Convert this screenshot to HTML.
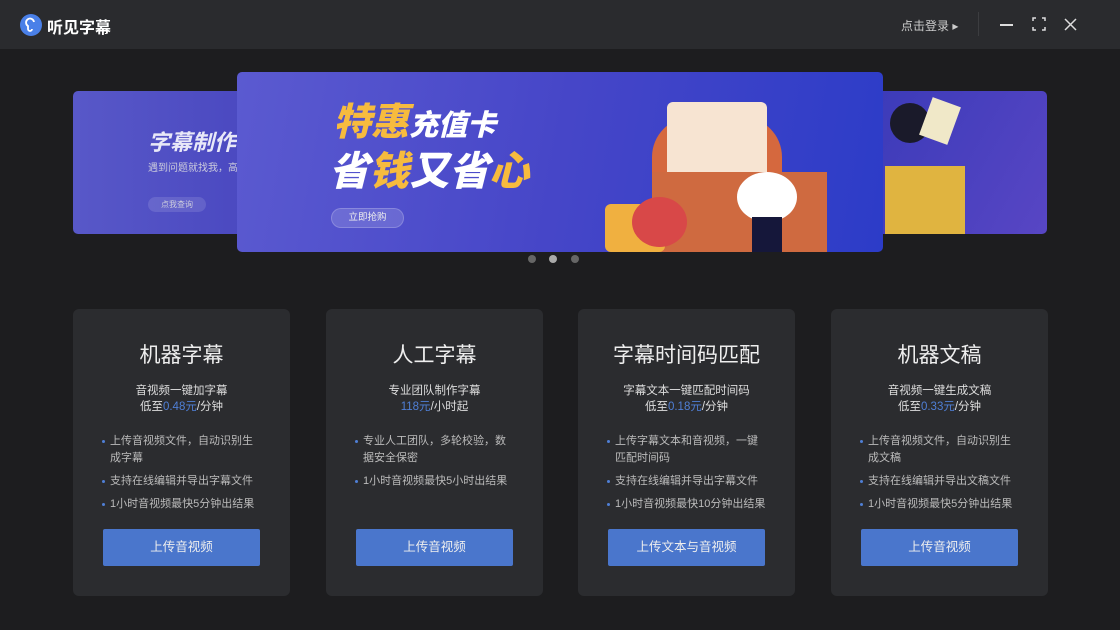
<!DOCTYPE html>
<html><head><meta charset="utf-8"><style>
*{margin:0;padding:0;box-sizing:border-box}
body{width:1120px;height:630px;background:#1d1d1f;font-family:"Liberation Sans","Noto Sans CJK SC",sans-serif;position:relative;overflow:hidden;color:#ddd}
.bar{position:absolute;left:0;top:0;width:1120px;height:49px;background:#2a2b2e}
.logo{position:absolute;left:20px;top:14px;width:22px;height:22px;border-radius:50%;background:#4a80e8}
.abs{position:absolute}
.card{position:absolute;top:309px;width:217px;height:287px;background:#2b2c2f;border-radius:6px;text-align:center}
.card h2{margin-top:30px;font-size:21px;font-weight:normal;color:#eee}
.sub{margin-top:14px;font-size:11.5px;line-height:16px;color:#ddd}
.sub b{font-weight:normal;color:#4f7fd6}
ul{list-style:none;text-align:left;margin:18px 0 0 37px;width:150px;font-size:11px;line-height:17px;color:#bbb}
li{position:relative;margin-bottom:6px}
li.n{white-space:nowrap}
li:before{content:"";position:absolute;left:-8px;top:7px;width:3px;height:3px;background:#4f7fd6;border-radius:50%}
.btn{position:absolute;left:30px;top:220px;width:157px;height:37px;background:#4a76cc;border-radius:2px;color:#eee;font-size:12.5px;line-height:37px}
</style></head><body>
<div class="bar"></div>
<div class="logo"><svg width="22" height="22" viewBox="0 0 22 22"><path d="M14 8a4 4 0 1 0-6 4v3a2 2 0 0 0 4 0" stroke="#fff" stroke-width="1.8" fill="none"/></svg></div>
<div class="abs" style="left:47px;top:14px;font-size:16px;font-weight:bold;color:#fff">听见字幕</div>
<div class="abs" style="left:901px;top:17px;font-size:12px;color:#ccc">点击登录 ▸</div>
<div class="abs" style="left:978px;top:12px;width:1px;height:24px;background:#3c3d40"></div>
<div class="abs" style="left:1000px;top:24px;width:13px;height:1.5px;background:#ddd"></div>
<svg class="abs" style="left:1032px;top:17px" width="14" height="14"><path d="M1 4V1h3M10 1h3v3M13 10v3h-3M4 13H1v-3" stroke="#ddd" stroke-width="1.5" fill="none"/></svg>
<svg class="abs" style="left:1064px;top:18px" width="13" height="13"><path d="M1 1L12 12M12 1L1 12" stroke="#ddd" stroke-width="1.5"/></svg>

<div class="abs" style="left:73px;top:91px;width:180px;height:143px;border-radius:5px;background:linear-gradient(90deg,#5858c8,#4a48c0);overflow:hidden">
<div class="abs" style="left:75px;top:34px;font-size:22px;font-weight:bold;font-style:italic;color:#e8e8f8;white-space:nowrap">字幕制作</div>
<div class="abs" style="left:75px;top:68px;font-size:10px;color:#ccd;white-space:nowrap">遇到问题就找我，高效</div>
<div class="abs" style="left:75px;top:106px;width:58px;height:15px;border-radius:8px;background:rgba(255,255,255,.12);font-size:8px;line-height:15px;text-align:center;color:#ccd">点我查询</div></div>
<div class="abs" style="left:860px;top:91px;width:187px;height:143px;border-radius:5px;background:linear-gradient(120deg,#3a3ab8,#5846c4)">
<div class="abs" style="left:30px;top:12px;width:40px;height:40px;border-radius:50%;background:#1a1a2a"></div>
<div class="abs" style="left:25px;top:75px;width:80px;height:68px;background:#e0b440"></div>
<div class="abs" style="left:65px;top:10px;width:30px;height:40px;background:#f0e8c8;transform:rotate(20deg)"></div></div>

<div class="abs" style="left:237px;top:72px;width:646px;height:180px;border-radius:5px;background:linear-gradient(100deg,#5b5ad0 0%,#4646c8 50%,#2c3cc8 100%);overflow:hidden">
<div class="abs" style="left:96px;top:28px;font-size:38px;line-height:46px;font-weight:900;font-style:italic;color:#f7bb3e;white-space:nowrap">特惠<span style="color:#fff;font-size:29px">充值卡</span></div>
<div class="abs" style="left:92px;top:76px;font-size:40px;line-height:48px;font-weight:900;font-style:italic;color:#fff;white-space:nowrap">省<span style="color:#f7bb3e">钱</span>又省<span style="color:#f7bb3e">心</span></div>
<div class="abs" style="left:94px;top:136px;width:73px;height:20px;border-radius:10px;background:rgba(255,255,255,.15);border:1px solid rgba(255,255,255,.2);font-size:9.5px;line-height:18px;text-align:center;color:#eee">立即抢购</div>
<div class="abs" style="left:415px;top:45px;width:130px;height:140px;border-radius:40px 40px 0 0;background:#d5683e"></div>
<div class="abs" style="left:430px;top:30px;width:100px;height:80px;border-radius:6px;background:#f7e4d2"></div>
<div class="abs" style="left:415px;top:100px;width:175px;height:80px;background:#cf6a40"></div>
<div class="abs" style="left:368px;top:132px;width:60px;height:48px;background:#f0b040;border-radius:6px"></div>
<div class="abs" style="left:395px;top:125px;width:55px;height:50px;border-radius:50%;background:#d84848"></div>
<div class="abs" style="left:500px;top:100px;width:60px;height:50px;border-radius:50%;background:#fff"></div>
<div class="abs" style="left:515px;top:145px;width:30px;height:35px;background:#15173a"></div></div>
<div class="abs" style="left:528px;top:255px;width:8px;height:8px;border-radius:50%;background:#666"></div>
<div class="abs" style="left:549px;top:255px;width:8px;height:8px;border-radius:50%;background:#aaa"></div>
<div class="abs" style="left:571px;top:255px;width:8px;height:8px;border-radius:50%;background:#666"></div>

<div class="card" style="left:73px"><h2>机器字幕</h2><div class="sub">音视频一键加字幕<br>低至<b>0.48元</b>/分钟</div>
<ul><li>上传音视频文件，自动识别生成字幕</li><li class="n">支持在线编辑并导出字幕文件</li><li class="n">1小时音视频最快5分钟出结果</li></ul><div class="btn">上传音视频</div></div>
<div class="card" style="left:326px"><h2>人工字幕</h2><div class="sub">专业团队制作字幕<br><b>118元</b>/小时起</div>
<ul><li>专业人工团队，多轮校验，数据安全保密</li><li class="n">1小时音视频最快5小时出结果</li></ul><div class="btn">上传音视频</div></div>
<div class="card" style="left:578px"><h2>字幕时间码匹配</h2><div class="sub">字幕文本一键匹配时间码<br>低至<b>0.18元</b>/分钟</div>
<ul><li>上传字幕文本和音视频，一键匹配时间码</li><li class="n">支持在线编辑并导出字幕文件</li><li class="n">1小时音视频最快10分钟出结果</li></ul><div class="btn">上传文本与音视频</div></div>
<div class="card" style="left:831px"><h2>机器文稿</h2><div class="sub">音视频一键生成文稿<br>低至<b>0.33元</b>/分钟</div>
<ul><li>上传音视频文件，自动识别生成文稿</li><li class="n">支持在线编辑并导出文稿文件</li><li class="n">1小时音视频最快5分钟出结果</li></ul><div class="btn">上传音视频</div></div>
</body></html>
